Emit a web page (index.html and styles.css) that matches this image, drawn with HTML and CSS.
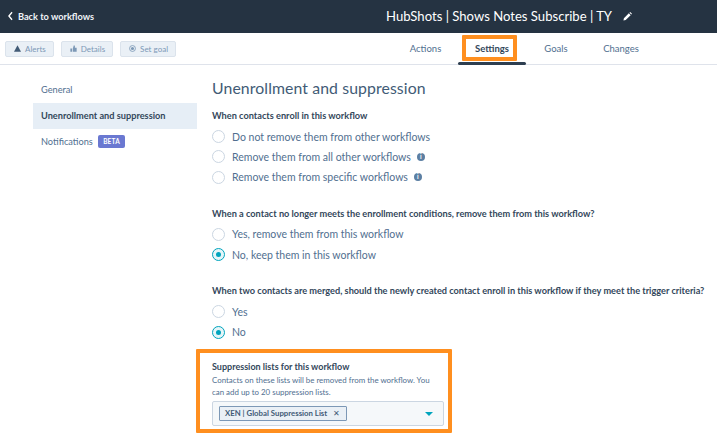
FILE: index.html
```html
<!DOCTYPE html>
<html lang="en">
<head>
    <meta charset="UTF-8">
    <title>Workflow settings</title>
    <link rel="stylesheet" href="styles.css">
</head>
<body>

    <!-- Header -->
    <header class="topbar">
        <a class="back-link">
            <svg class="back-icon" viewBox="0 0 8 14"><path d="M6.500 1 1.500 7l5 6" fill="none" stroke="#fff" stroke-width="2.200"/></svg>
            Back to workflows
        </a>
        <div class="wf-title">
            <span>HubShots | Shows Notes Subscribe | TY</span>
            <svg class="pencil" viewBox="0 0 10 10"><path d="M0.500 9.500 1 7 6.500 1.500 8.500 3.500 3 9zM7.200 0.800 8 0 10 2 9.200 2.800z" fill="#fff"/></svg>
        </div>
    </header>

    <!-- Sub navigation -->
    <nav class="subbar">
        <div class="tool-buttons">
            <button class="tool-btn">
                <svg viewBox="0 0 10 10"><path d="M5 0.500 10 9.500H0z" fill="#425b76"/></svg>
                Alerts
            </button>
            <button class="tool-btn">
                <svg viewBox="0 0 10 10"><path d="M0.500 5h2.500v4.500H0.500zM4 5l1.500-4.500 1.500 .5V4h2.500v5.500H4z" fill="#7c98b6"/></svg>
                Details
            </button>
            <button class="tool-btn">
                <svg viewBox="0 0 10 10"><circle cx="5" cy="5" r="4.200" fill="none" stroke="#7c98b6" stroke-width="1.200"/><circle cx="5" cy="5" r="2.200" fill="#7c98b6"/></svg>
                Set goal
            </button>
        </div>
        <div class="tabs">
            <a class="tab tab-actions">Actions</a>
            <a class="tab tab-settings active">Settings</a>
            <a class="tab tab-goals">Goals</a>
            <a class="tab tab-changes">Changes</a>
            <div class="callout"></div>
        </div>
    </nav>

    <div class="layout">
        <!-- Side menu -->
        <aside class="sidebar">
            <a class="side-item">General</a>
            <a class="side-item selected">Unenrollment and suppression</a>
            <a class="side-item">Notifications <span class="beta">BETA</span></a>
        </aside>

        <!-- Form -->
        <main class="content">
            <h1>Unenrollment and suppression</h1>

            <section class="group group-first">
                <h2>When contacts enroll in this workflow</h2>
                <div class="radio"><span class="dot"></span>Do not remove them from other workflows</div>
                <div class="radio"><span class="dot"></span>Remove them from all other workflows <span class="info">i</span></div>
                <div class="radio"><span class="dot"></span>Remove them from specific workflows <span class="info">i</span></div>
            </section>

            <section class="group">
                <h2>When a contact no longer meets the enrollment conditions, remove them from this workflow?</h2>
                <div class="radio"><span class="dot"></span>Yes, remove them from this workflow</div>
                <div class="radio"><span class="dot checked"></span>No, keep them in this workflow</div>
            </section>

            <section class="group">
                <h2>When two contacts are merged, should the newly created contact enroll in this workflow if they meet the trigger criteria?</h2>
                <div class="radio"><span class="dot"></span>Yes</div>
                <div class="radio"><span class="dot checked"></span>No</div>
            </section>

            <section class="suppression">
                <h2>Suppression lists for this workflow</h2>
                <p>Contacts on these lists will be removed from the workflow. You can add up to 20 suppression lists.</p>
                <div class="select">
                    <span class="tag">XEN | Global Suppression List <span class="tag-x">&#10005;</span></span>
                    <span class="caret"></span>
                </div>
            </section>
        </main>
    </div>

</body>
</html>
```

FILE: styles.css
```css
/* General */
body {
    font-family: Lato, "Open Sans", sans-serif;
    color: #33475b;
    margin: 0;
    padding: 0;
    background-color: #fff;
    height: 438px;
    overflow: hidden;
}

/* Header */
.topbar {
    height: 32px;
    padding: 0 0 1px 8px;
    background-color: #253342;
    color: #fff;
    display: flex;
    align-items: center;
}

.back-link {
    display: flex;
    align-items: center;
    gap: 5px;
    width: 86px;
    font-size: 9.200px;
    font-weight: 700;
    color: #f0f4f8;
    white-space: nowrap;
}

.back-icon {
    width: 7px;
    height: 12px;
}

.wf-title {
    margin-left: 292px;
    display: flex;
    align-items: center;
    gap: 11px;
    font-size: 13.100px;
    white-space: nowrap;
}

.pencil {
    width: 9px;
    height: 9px;
}

/* Sub navigation */
.subbar {
    height: 31px;
    border-bottom: 1px solid #dfe3eb;
    display: flex;
    align-items: center;
    padding-left: 5px;
}

.tool-buttons {
    display: flex;
    gap: 7px;
    width: 404px;
}

.tool-btn {
    height: 16px;
    padding: 0 7px 0 8px;
    display: flex;
    align-items: center;
    gap: 4px;
    font-family: inherit;
    font-size: 8px;
    color: #7c98b6;
    background-color: #eaf0f6;
    border: 1px solid #dbe3ec;
    border-radius: 2px;
}

.tool-btn svg {
    width: 7px;
    height: 7px;
}

.tabs {
    position: relative;
    display: flex;
    height: 31px;
    align-items: center;
    font-size: 9.500px;
    color: #516f90;
}

.tab {
    text-align: center;
    line-height: 31px;
}

.tab-actions { width: 33px; }
.tab-settings { width: 68px; margin-left: 16px; position: relative; color: #33475b; font-weight: 700; }
.tab-goals { width: 30px; margin-left: 15px; }
.tab-changes { width: 40px; margin-left: 30px; }

.tab-settings.active::after {
    content: "";
    position: absolute;
    left: 0;
    right: 0;
    bottom: -1px;
    height: 3px;
    border-radius: 2px;
    background-color: #2d3e50;
}

/* Orange box around the Settings tab */
.callout {
    position: absolute;
    left: 53px;
    top: 2px;
    width: 47px;
    height: 18px;
    border: 4px solid #ff8f1f;
    border-radius: 1px;
}

/* Page layout */
.layout {
    display: flex;
}

.sidebar {
    width: 164px;
    margin-left: 33px;
    padding-top: 12px;
    flex-shrink: 0;
}

.side-item {
    display: block;
    height: 26px;
    line-height: 26px;
    padding-left: 8px;
    font-size: 9.200px;
    color: #516f90;
}

.side-item.selected {
    background-color: #e6eef6;
    color: #33475b;
    font-weight: 700;
}

.beta {
    display: inline-block;
    margin-left: 3px;
    padding: 0 5px;
    height: 13px;
    line-height: 13px;
    font-size: 6.500px;
    font-weight: 700;
    letter-spacing: 0.200px;
    color: #fff;
    background-color: #6a78d1;
    border-radius: 2px;
    vertical-align: 1px;
}

/* Form */
.content {
    margin-left: 15px;
    width: 490px;
}

h1 {
    font-size: 15.800px;
    font-weight: 400;
    margin: 12px 0 0;
    line-height: 22px;
    color: #425b76;
    letter-spacing: 0.100px;
}

h2 {
    font-size: 9.200px;
    font-weight: 700;
    margin: 0;
    line-height: 14px;
    color: #33475b;
    white-space: nowrap;
}

.group {
    margin-top: 19.300px;
}

.group-first {
    margin-top: 10px;
}

.radio {
    display: flex;
    align-items: center;
    height: 20.300px;
    font-size: 10.500px;
    color: #516f90;
}

h2 + .radio {
    margin-top: 3.500px;
}

.dot {
    width: 11px;
    height: 11px;
    margin-right: 7px;
    border: 1px solid #cbd6e2;
    border-radius: 50%;
    background-color: #fff;
    flex-shrink: 0;
    position: relative;
}

.dot.checked {
    border-color: #00a4bd;
    background-color: #e5f5f8;
}

.dot.checked::after {
    content: "";
    position: absolute;
    left: 3px;
    top: 3px;
    width: 5px;
    height: 5px;
    border-radius: 50%;
    background-color: #00a4bd;
}

.info {
    width: 8px;
    height: 8px;
    line-height: 8px;
    margin-left: 6px;
    border-radius: 50%;
    background-color: #5c7fa3;
    color: #fff;
    font-size: 6.500px;
    font-weight: 700;
    text-align: center;
}

/* Suppression lists */
.suppression {
    box-sizing: border-box;
    margin-top: 7px;
    margin-left: -16px;
    width: 256px;
    height: 84px;
    padding: 7px 0 0 12px;
    border: 4px solid #ff8f1f;
    border-radius: 1px;
}

.suppression h2 {
    font-size: 9px;
}

.suppression p {
    margin: 0;
    width: 228px;
    font-size: 7.900px;
    line-height: 12px;
    color: #516f90;
}

.select {
    box-sizing: border-box;
    width: 232px;
    height: 25px;
    margin-top: 3px;
    padding-left: 6px;
    display: flex;
    align-items: center;
    justify-content: space-between;
    background-color: #f5f8fa;
    border: 1px solid #cbd6e2;
    border-radius: 2px;
}

.tag {
    height: 13px;
    line-height: 13px;
    padding: 0 6px 0 5px;
    font-size: 7.800px;
    font-weight: 700;
    color: #425b76;
    background-color: #eaf0f6;
    border: 1px solid #7c98b6;
    border-radius: 1px;
    white-space: nowrap;
}

.tag-x {
    font-weight: 400;
    font-size: 8px;
    margin-left: 4px;
}

.caret {
    width: 0;
    height: 0;
    margin-right: 10px;
    border-left: 4px solid transparent;
    border-right: 4px solid transparent;
    border-top: 4px solid #00a4bd;
}
```
